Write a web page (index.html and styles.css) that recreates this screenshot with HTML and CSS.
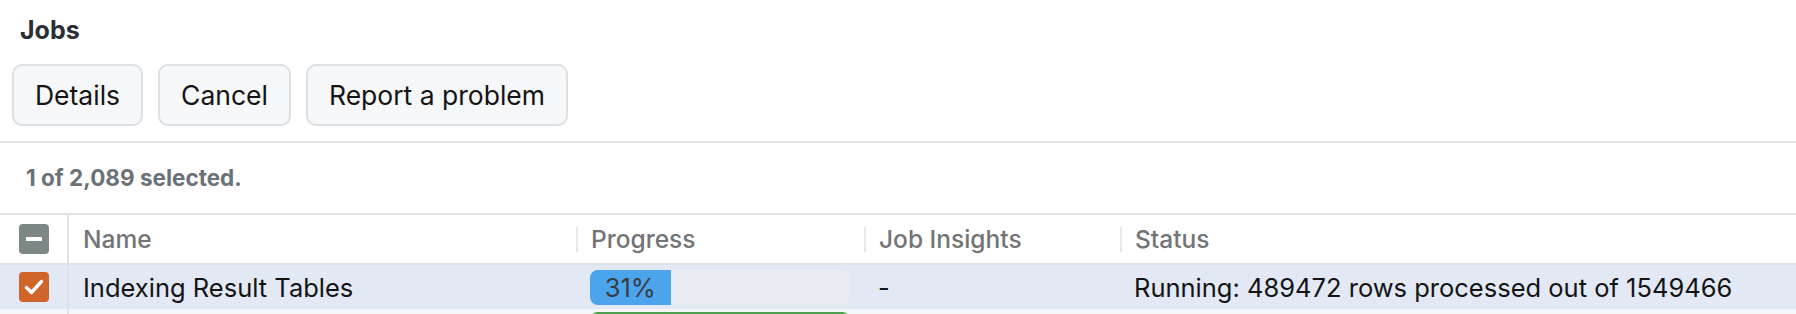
FILE: index.html
```html
<!DOCTYPE html>
<html>
	<head>
		<meta charset="utf-8" />
		<title>Jobs</title>
		<link rel="stylesheet" href="styles.css">
	</head>
	<body>
		<div class="jobs">
			<h2 class="jobs-title">Jobs</h2>
			<div class="toolbar">
				<button class="btn">Details</button>
				<button class="btn">Cancel</button>
				<button class="btn">Report a problem</button>
			</div>
			<div class="summary">1 of 2,089 selected.</div>

			<div class="grid">
				<div class="row head">
					<div class="cell check"><span class="box box-mixed"></span></div>
					<div class="cell">Name</div>
					<div class="cell sep">Progress</div>
					<div class="cell sep">Job Insights</div>
					<div class="cell sep">Status</div>
				</div>
				<div class="row selected">
					<div class="cell check">
						<span class="box box-on">
							<svg width="30" height="30" viewBox="0 0 30 30"><polyline points="7.5,15.5 12.5,20.5 22.5,9.5" fill="none" stroke="#fff" stroke-width="3.4" stroke-linecap="round" stroke-linejoin="round"/></svg>
						</span>
					</div>
					<div class="cell">Indexing Result Tables</div>
					<div class="cell">
						<div class="bar"><div class="fill" style="width: 31%">31%</div></div>
					</div>
					<div class="cell">-</div>
					<div class="cell">Running: 489472 rows processed out of 1549466</div>
				</div>
				<div class="row next">
					<div class="cell check"></div>
					<div class="cell"></div>
					<div class="cell">
						<div class="bar done"></div>
					</div>
					<div class="cell"></div>
					<div class="cell"></div>
				</div>
			</div>
		</div>
	</body>
</html>
```

FILE: styles.css
```css
body {
	margin: 0;
	background: #fff;
	font-family: Inter, "Noto Sans", sans-serif;
	color: #141414;
	overflow: hidden;
}

.jobs-title {
	margin: 0;
	padding: 15px 20px 0;
	font-size: 25px;
	line-height: 31px;
	font-weight: 700;
	color: #2b2f33;
}

.toolbar {
	display: flex;
	gap: 15px;
	padding: 18px 12px 15px;
	border-bottom: 2px solid #dfe3e8;
}

.btn {
	height: 62px;
	padding: 0 21px;
	font-family: inherit;
	font-size: 26.5px;
	color: #141414;
	background: #f6f7f9;
	border: 2px solid #dcdfe3;
	border-radius: 10px;
}

.summary {
	padding: 0 26px;
	line-height: 70px;
	font-size: 22.5px;
	font-weight: 700;
	color: #6b7177;
	border-bottom: 2px solid #dfe3e8;
}

.row {
	display: grid;
	grid-template-columns: 69px 507px 288px 256px 1fr;
	align-items: stretch;
}

.cell {
	display: flex;
	align-items: center;
	padding-left: 14px;
	font-size: 25.5px;
	white-space: nowrap;
}

.cell.check {
	justify-content: center;
	padding-left: 0;
	border-right: 2px solid #dfe3e8;
}

.head {
	height: 48px;
	border-bottom: 2px solid #dde2e8;
}

.head .cell {
	font-size: 24.5px;
	font-weight: 500;
	color: #727476;
}

.head .cell.sep {
	padding-left: 15px;
	background: linear-gradient(#e9e9e9, #e9e9e9) no-repeat left center / 2px 25px;
}

.selected {
	height: 44px;
	background: #e2e9f5;
}

.next {
	height: 40px;
	background: #f5f6f7;
}

.next .cell {
	align-items: flex-start;
	padding-top: 3px;
}

.box {
	width: 30px;
	height: 30px;
	border-radius: 4px;
	display: flex;
	align-items: center;
	justify-content: center;
}

.box-mixed {
	background: #7d8886;
}

.box-mixed::after {
	content: "";
	width: 16px;
	height: 4px;
	background: #fff;
}

.box-on {
	background: #cf6529;
}

.bar {
	width: 260px;
	height: 35px;
	border-radius: 8px;
	background: #e8ebef;
	overflow: hidden;
}

.bar.done {
	background: #4f9d4f;
}

.fill {
	height: 100%;
	display: flex;
	align-items: center;
	justify-content: center;
	background: #4ba4ec;
	font-size: 25.5px;
	color: #383d42;
}
```
